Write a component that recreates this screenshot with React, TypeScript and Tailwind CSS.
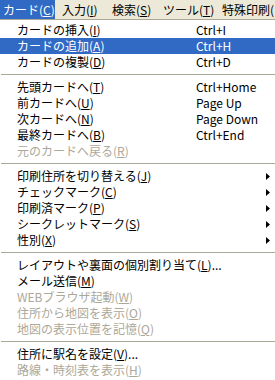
type Entry =
  | 'sep'
  | {
      label: string;
      accel: string;
      tail?: string;
      shortcut?: string;
      sub?: boolean;
      disabled?: boolean;
      active?: boolean;
    };

const entries: Entry[] = [
  { label: 'カードの挿入', accel: 'I', shortcut: 'Ctrl+I' },
  { label: 'カードの追加', accel: 'A', shortcut: 'Ctrl+H', active: true },
  { label: 'カードの複製', accel: 'D', shortcut: 'Ctrl+D' },
  'sep',
  { label: '先頭カードへ', accel: 'T', shortcut: 'Ctrl+Home' },
  { label: '前カードへ', accel: 'U', shortcut: 'Page Up' },
  { label: '次カードへ', accel: 'N', shortcut: 'Page Down' },
  { label: '最終カードへ', accel: 'B', shortcut: 'Ctrl+End' },
  { label: '元のカードへ戻る', accel: 'R', disabled: true },
  'sep',
  { label: '印刷住所を切り替える', accel: 'J', sub: true },
  { label: 'チェックマーク', accel: 'C', sub: true },
  { label: '印刷済マーク', accel: 'P', sub: true },
  { label: 'シークレットマーク', accel: 'S', sub: true },
  { label: '性別', accel: 'X', sub: true },
  'sep',
  { label: 'レイアウトや裏面の個別割り当て', accel: 'L', tail: '...' },
  { label: 'メール送信', accel: 'M' },
  { label: 'WEBブラウザ起動', accel: 'W', disabled: true },
  { label: '住所から地図を表示', accel: 'O', disabled: true },
  { label: '地図の表示位置を記憶', accel: 'Q', disabled: true },
  'sep',
  { label: '住所に駅名を設定', accel: 'V', tail: '...' },
  { label: '路線・時刻表を表示', accel: 'H', disabled: true },
];

function Arrow({ color }: { color: string }) {
  return (
    <svg width="4" height="7" viewBox="0 0 4 7" className="shrink-0">
      <polygon points="0,0 4,3.5 0,7" fill={color} />
    </svg>
  );
}

export default function App() {
  return (
    <div className="w-[275px] h-[380px] overflow-hidden bg-white font-['Noto_Sans_CJK_JP',sans-serif] text-[12px] leading-[16px] text-black">
      {/* menu bar */}
      <div className="h-[19px] flex items-stretch bg-[#ECE9D8] whitespace-nowrap overflow-hidden">
        <div className="w-[55px] shrink-0 pl-[3px] flex items-center bg-[#316AC5] text-white">
          カード(<u>C</u>)
        </div>
        <div className="w-[51px] shrink-0 pl-[7px] flex items-center">入力(<u>I</u>)</div>
        <div className="w-[51px] shrink-0 pl-[6px] flex items-center">検索(<u>S</u>)</div>
        <div className="w-[59px] shrink-0 pl-[6px] flex items-center">ツール(<u>T</u>)</div>
        <div className="shrink-0 pl-[6px] flex items-center">特殊印刷(</div>
      </div>

      {/* dropdown */}
      <div className="w-[283px] border-t border-[#ACA899] pt-[2px] bg-white">
        {entries.map((e, i) =>
          e === 'sep' ? (
            <div key={i} className="h-[9px] flex items-center pl-px">
              <div className="h-px w-full bg-[#ACA899]" />
            </div>
          ) : (
            <div
              key={i}
              className={`h-[16px] flex items-center pl-[17px] pr-[13px] whitespace-nowrap ${
                e.active ? 'bg-[#316AC5] text-white' : e.disabled ? 'text-[#ACA899]' : ''
              }`}
            >
              <span className="w-[179px] shrink-0">
                {e.label}(<u>{e.accel}</u>){e.tail}
              </span>
              <span className="flex-1">{e.shortcut}</span>
              {e.sub && <Arrow color={e.active ? '#fff' : '#000'} />}
            </div>
          )
        )}
      </div>
    </div>
  );
}
